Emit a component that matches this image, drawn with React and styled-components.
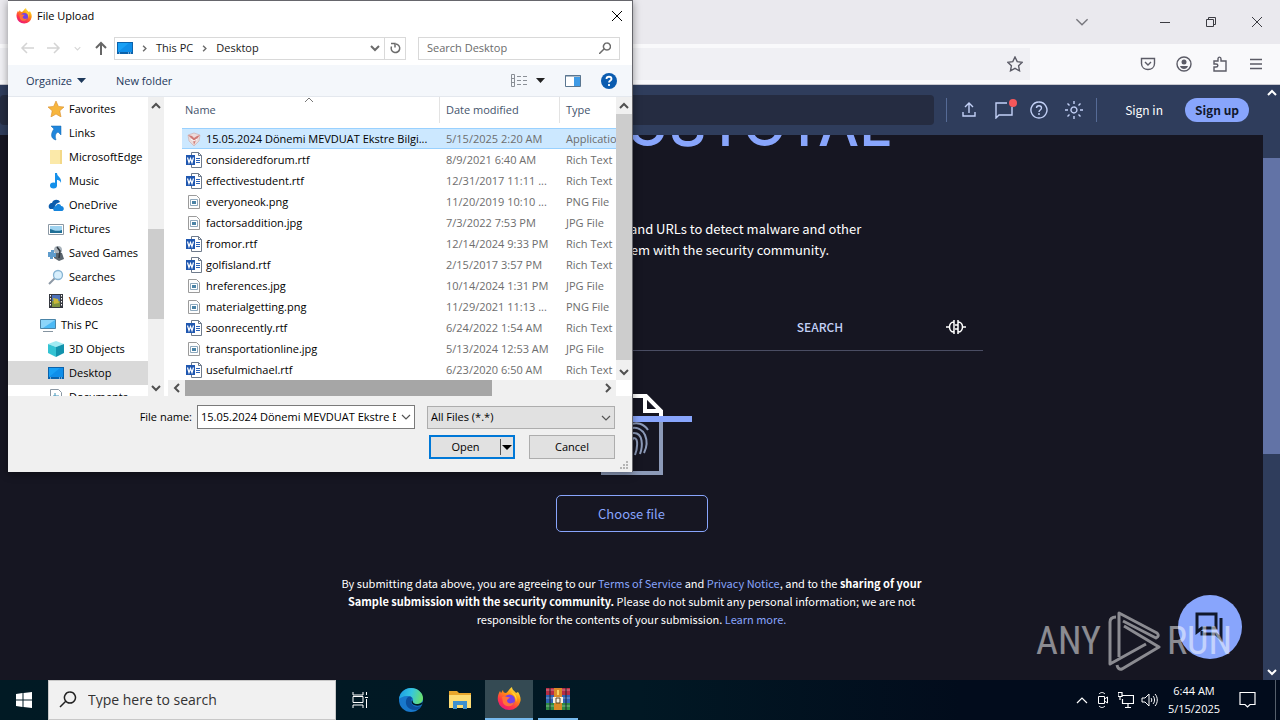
import React, { useState } from 'react';
import styled, { createGlobalStyle } from 'styled-components';

const GlobalStyle = createGlobalStyle`
  * {
    box-sizing: border-box;
  }
  body {
    margin: 0;
    background: #161622;
  }
  button, input, select {
    font: inherit;
    color: inherit;
    margin: 0;
  }
  button {
    padding: 0;
    border: 0;
    background: none;
  }
  a {
    text-decoration: none;
  }
  svg {
    display: block;
    flex: none;
  }
`;

const Desktop = styled.div`
  position: relative;
  display: flex;
  flex-direction: column;
  min-height: 100vh;
  overflow: hidden;
  font-family: 'Open Sans', 'Noto Sans', sans-serif;
  font-size: 11px;
  line-height: 16px;
`;

/* browser */
const Browser = styled.div`
  flex: 1;
  display: flex;
  flex-direction: column;
`;
const TabStrip = styled.div`
  height: 44px;
  background: #eae9ee;
  display: flex;
  align-items: center;
  justify-content: flex-end;
  gap: 30px;
  padding-right: 15px;
  color: #3c3c42;
`;
const TabsButton = styled.button`
  margin-right: 38px;
  color: #77777d;
`;
const UrlRow = styled.div`
  height: 41px;
  background: #f9f9fb;
  border-bottom: 1px solid #c9c9d0;
  display: flex;
  align-items: center;
  justify-content: space-between;
  padding-right: 16px;
  color: #5b5b66;
`;
const UrlField = styled.div`
  width: 1030px;
  height: 32px;
  background: #f0f0f4;
  display: flex;
  align-items: center;
  justify-content: flex-end;
  padding-right: 7px;
`;
const UrlActions = styled.div`
  display: flex;
  gap: 20px;
`;
const Viewport = styled.div`
  flex: 1;
  display: flex;
`;
const Page = styled.div`
  flex: 1;
  position: relative;
  display: flex;
  flex-direction: column;
  background: #161622;
  color: #fff;
  font-family: 'Noto Sans CJK SC', 'Noto Sans', sans-serif;
`;
const PageScroll = styled.div`
  width: 17px;
  background: #2f3d5c;
  display: flex;
  flex-direction: column;
  align-items: center;
  justify-content: space-between;
  padding: 3px 0;
  color: #fff;
`;
const PageThumb = styled.div`
  width: 17px;
  height: 296px;
  margin-bottom: 154px;
  background: #6273a6;
`;

const Header = styled.header`
  height: 50px;
  background: #2f3d5c;
  display: flex;
  align-items: center;
  padding-right: 14px;
  color: #c3d1f7;
`;
const HeaderSearch = styled.input`
  flex: 1;
  height: 30px;
  border: 0;
  border-radius: 4px;
  background: #252c41;
  outline: none;
`;
const HeaderGroup = styled.div`
  height: 24px;
  display: flex;
  align-items: center;
  gap: 15px;
  margin-left: 12px;
  padding: 0 12px;
  border: solid #566b96;
  border-width: 0 1px;
`;
const Badge = styled.span`
  position: absolute;
  top: -2px;
  right: -3px;
  width: 8px;
  height: 8px;
  border-radius: 50%;
  background: #f5575a;
`;
const IconButton = styled.button`
  position: relative;
`;
const SignIn = styled.a`
  margin-left: 28px;
  font-size: 12px;
  line-height: 24px;
  color: #fff;
`;
const SignUp = styled.a`
  margin-left: 22px;
  width: 64px;
  border-radius: 12px;
  background: #88a5fc;
  color: #10182c;
  font-size: 12px;
  font-weight: bold;
  line-height: 24px;
  text-align: center;
`;

const Main = styled.main`
  flex: 1;
  display: flex;
  flex-direction: column;
  align-items: center;
`;
const LogoClip = styled.div`
  width: 521px;
  height: 28px;
  overflow: hidden;
  display: flex;
  align-items: flex-end;
  justify-content: flex-end;
`;
const Logo = styled.div`
  font-family: Inter, sans-serif;
  font-size: 58px;
  font-weight: 500;
  line-height: 68px;
  padding-bottom: 4px;
  color: #88a5fc;
`;
const Intro = styled.p`
  margin: 55px 0 0;
  font-size: 13px;
  line-height: 21px;
  text-align: center;
`;
const Tabs = styled.div`
  width: 702px;
  height: 48px;
  margin-top: 43px;
  padding-left: 27px;
  display: flex;
  align-items: center;
  border-bottom: 1px solid #4a4d63;
`;
const Tab = styled.button`
  width: 205px;
  font-size: 12px;
  font-weight: 500;
  color: ${props => (props.$active ? '#88a5fc' : '#c3d1f7')};
`;
const TabIcon = styled.button`
  margin-left: 23px;
  color: #fff;
`;
const Upload = styled.div`
  margin-top: 42px;
`;
const ChooseFile = styled.button`
  width: 152px;
  height: 37px;
  margin-top: 20px;
  border: 1px solid #88a5fc;
  border-radius: 5px;
  color: #88a5fc;
  font-size: 13px;
`;
const Legal = styled.p`
  width: 590px;
  margin: 42px 0 0;
  font-size: 11px;
  line-height: 18px;
  text-align: center;
  > a {
    color: #88a5fc;
  }
`;
const Chat = styled.button`
  position: absolute;
  right: 21px;
  bottom: 21px;
  width: 64px;
  height: 64px;
  border-radius: 50%;
  background: #88a5fc;
  color: #10182c;
  display: flex;
  align-items: center;
  justify-content: center;
`;
const Watermark = styled.div`
  position: absolute;
  right: 48px;
  bottom: 48px;
  display: flex;
  align-items: center;
  gap: 6px;
  color: #fff;
  opacity: 0.5;
  font-family: 'Liberation Sans Narrow', 'Roboto Condensed', Roboto, sans-serif;
  font-size: 38px;
  line-height: 62px;
`;

/* upload dialog */
const Dialog = styled.section`
  position: absolute;
  top: 0;
  left: 8px;
  width: 625px;
  background: #fff;
  color: #000;
  border: solid #66666c;
  border-width: 1px 1px 0 0;
  box-shadow: 0 2px 8px rgba(0, 0, 0, 0.4);
`;
const TitleBar = styled.div`
  height: 30px;
  display: flex;
  align-items: center;
  gap: 5px;
  padding: 0 9px 0 8px;
`;
const Title = styled.h1`
  flex: 1;
  margin: 0;
  font-size: 11px;
  font-weight: normal;
`;
const NavRow = styled.div`
  height: 34px;
  display: flex;
  align-items: center;
  padding: 0 12px;
`;
const NavButtons = styled.div`
  width: 94px;
  display: flex;
  align-items: center;
  gap: 13px;
  color: #d4d4d4;
`;
const Address = styled.div`
  flex: 1;
  height: 23px;
  border: 1px solid #d9d9d9;
  display: flex;
  align-items: center;
  gap: 8px;
  padding-left: 2px;
  color: #6b6b6b;
  > a {
    color: #1a1a1a;
  }
`;
const AddressEnd = styled.div`
  height: 21px;
  margin-left: auto;
  display: flex;
  align-items: center;
  > button {
    height: 21px;
    padding: 0 4px;
  }
  > button + button {
    border-left: 1px solid #d9d9d9;
  }
`;
const SearchBox = styled.div`
  width: 202px;
  height: 23px;
  margin-left: 12px;
  border: 1px solid #d9d9d9;
  display: flex;
  align-items: center;
  padding: 0 8px;
  color: #6b6b6b;
  > input {
    flex: 1;
    min-width: 0;
    border: 0;
    padding: 0;
    outline: none;
  }
  > input::placeholder {
    color: #6b6b6b;
    opacity: 1;
  }
`;
const Toolbar = styled.div`
  height: 32px;
  background: #f4f7fb;
  border-bottom: 1px solid #e4e8ee;
  display: flex;
  align-items: center;
  padding: 0 15px 0 18px;
  color: #1e395b;
`;
const ToolButton = styled.button`
  display: flex;
  align-items: center;
  gap: 5px;
  margin-right: ${props => props.$gap || 0}px;
`;
const ToolSpacer = styled.div`
  flex: 1;
`;
const Panes = styled.div`
  height: 299px;
  display: flex;
`;
const Tree = styled.nav`
  width: 140px;
  overflow: hidden;
`;
const TreeItem = styled.a`
  height: 24px;
  display: flex;
  align-items: center;
  gap: 5px;
  padding-left: ${props => (props.$root ? 32 : 40)}px;
  background: ${props => (props.$active ? '#d9d9d9' : 'none')};
  color: #000;
  white-space: nowrap;
`;
const Scroll = styled.div`
  flex: none;
  display: flex;
  flex-direction: ${props => (props.$row ? 'row' : 'column')};
  align-items: center;
  background: #f0f0f0;
  color: #505050;
  ${props => (props.$row ? 'height: 16px;' : 'width: 16px;')}
  > button {
    width: 17px;
    height: 17px;
    display: flex;
    align-items: center;
    justify-content: center;
  }
`;
const Thumb = styled.div`
  background: ${props => props.color};
`;
const ListPane = styled.div`
  flex: 1;
  min-width: 0;
  margin-left: 4px;
  display: flex;
`;
const ListColumn = styled.div`
  flex: 1;
  min-width: 0;
  display: flex;
  flex-direction: column;
`;
const ListClip = styled.div`
  position: relative;
  flex: 1;
  min-height: 0;
  overflow: hidden;
  padding-left: 14px;
`;
const SortMark = styled.span`
  position: absolute;
  top: -2px;
  left: 136px;
  color: #777;
`;
const Table = styled.table`
  width: 100%;
  table-layout: fixed;
  border-collapse: separate;
  border-spacing: 0;
  th, td {
    padding: 0;
    font-weight: normal;
    text-align: left;
    white-space: nowrap;
    overflow: hidden;
  }
  th {
    height: 31px;
    vertical-align: top;
    color: #44546c;
  }
  th > div {
    height: 26px;
    line-height: 26px;
    padding-left: 6px;
    border-left: 1px solid #e3e3e3;
  }
  th:first-child > div {
    border: 0;
    padding-left: 3px;
  }
  td {
    height: 21px;
    line-height: 19px;
    padding-left: 7px;
    color: #6d6d6d;
    border: solid transparent;
    border-width: 1px 0;
  }
  td:first-child {
    color: #000;
    padding-left: 4px;
  }
`;
const FileRow = styled.tr`
  background: ${props => (props.$selected ? '#cce8ff' : 'none')};
  > td {
    border-color: ${props => (props.$selected ? '#99d1ff' : 'transparent')};
  }
`;
const FileName = styled.div`
  display: flex;
  align-items: center;
  gap: 4px;
`;
const Corner = styled.div`
  height: 16px;
  background: #fff;
`;
const ScrollSide = styled.div`
  display: flex;
  flex-direction: column;
  > :first-child {
    flex: 1;
  }
`;
const Footer = styled.div`
  position: relative;
  height: 76px;
  background: #f0f0f0;
  padding: 9px 17px 0 0;
`;
const FooterRow = styled.div`
  display: flex;
  justify-content: flex-end;
  align-items: center;
  margin-bottom: 6px;
`;
const Combo = styled.div`
  width: 218px;
  height: 24px;
  margin: 0 12px 0 5px;
  border: 1px solid #7a7a7a;
  background: #fff;
  display: flex;
  align-items: center;
  padding: 0 3px;
  color: #555;
  > input {
    flex: 1;
    min-width: 0;
    border: 0;
    padding: 0;
    outline: none;
    color: #000;
    margin-right: 5px;
  }
`;
const SelectWrap = styled.div`
  position: relative;
  width: 188px;
  color: #555;
  > select {
    width: 100%;
    height: 23px;
    display: block;
    appearance: none;
    border: 1px solid #adadad;
    border-radius: 0;
    background: #e1e1e1;
    padding: 0 3px;
    color: #000;
  }
  > svg {
    position: absolute;
    right: 4px;
    top: 7px;
  }
`;
const Button = styled.button`
  width: 86px;
  height: 24px;
  border: 1px solid #adadad;
  background: #e1e1e1;
`;
const OpenButton = styled(Button)`
  margin-right: 14px;
  border: 2px solid #0078d7;
  display: flex;
  align-items: center;
  > span {
    flex: 1;
    border-right: 1px solid #555;
  }
`;
const Grip = styled.span`
  position: absolute;
  right: 3px;
  bottom: 2px;
`;

/* taskbar */
const Taskbar = styled.footer`
  height: 40px;
  background: linear-gradient(to right, #011a24 0%, #011824 50%, #020c1c 75%);
  display: flex;
  color: #fff;
`;
const TaskButton = styled.button`
  width: ${props => (props.$narrow ? 40 : 48)}px;
  height: 40px;
  margin-right: ${props => props.$gap || 0}px;
  display: flex;
  align-items: center;
  justify-content: center;
  background: ${props => (props.$active ? '#344a53' : 'none')};
  border-bottom: ${props => (props.$open ? 2 : 0)}px solid #76b9ed;
`;
const TaskSearch = styled.label`
  width: 288px;
  border: 1px solid #c8c8c8;
  background: #f1f1f1;
  color: #222;
  display: flex;
  align-items: center;
  gap: 11px;
  padding-left: 10px;
  > input {
    flex: 1;
    min-width: 0;
    border: 0;
    padding: 0;
    outline: none;
    background: none;
    font-size: 14px;
  }
  > input::placeholder {
    color: #333;
    opacity: 1;
  }
`;
const Tray = styled.div`
  margin-left: auto;
  display: flex;
  align-items: center;
  gap: 7px;
  padding-right: 4px;
`;
const Clock = styled.time`
  width: 56px;
  text-align: center;
  line-height: 18px;
`;
const Notifications = styled.button`
  height: 40px;
  padding: 0 19px 0 10px;
  border-right: 1px solid #56606b;
`;

/* icons */
const Line = ({ d, w = 16, h = w, box, sw = 1, ...rest }) => (
  <svg
    width={w}
    height={h}
    viewBox={box || `0 0 ${w} ${h}`}
    fill="none"
    stroke="currentColor"
    strokeWidth={sw}
    {...rest}
  >
    <path d={d} />
  </svg>
);

const Chevron = ({ dir = 'down', size = 10, sw = 2 }) => {
  const paths = {
    down: 'M1 3l4 4 4-4',
    up: 'M1 7l4-4 4 4',
    left: 'M7 1L3 5l4 4',
    right: 'M3 1l4 4-4 4',
  };
  return <Line d={paths[dir]} w={size} box="0 0 10 10" sw={sw} />;
};

const Firefox = ({ size, id }) => (
  <svg width={size} height={size} viewBox="0 0 24 24">
    <defs>
      <linearGradient id={id} x1="0.8" y1="0" x2="0.2" y2="1">
        <stop offset="0" stopColor="#fff44f" />
        <stop offset="0.35" stopColor="#ff980e" />
        <stop offset="0.7" stopColor="#ff3647" />
        <stop offset="1" stopColor="#e31587" />
      </linearGradient>
    </defs>
    <path
      fill={`url(#${id})`}
      d="M15 0c0 3 3 4 4 6l2-1c2 3 3 6 2.500 9A11.500 11.500 0 0 1 1 14C0 9 2 6 3 4l1 2c1-1 1-2 2-3 0 2 1 3 3 3 2-1 3-4 6-6z"
    />
    <circle cx="12.500" cy="13" r="5.500" fill="#7542e5" />
    <path d="M5 10c3-2 5 1 8 0-1 2-3 2-3 4 1 3 5 3 7 1-1 5-8 6-11 1z" fill="#ff7139" />
    <path d="M14 5c4 1 7 5 5 10 0-4-1-6-5-10z" fill="#ffd43a" />
  </svg>
);

const Monitor = () => (
  <svg width="16" height="16" viewBox="0 0 16 16">
    <path d="M0 2h16v12H0z" fill="#0b62ab" />
    <path d="M1 3h14v9H1z" fill="#18a0f5" />
    <path d="M1 12L12 3h3v9z" fill="#0f8ee9" />
    <path d="M2 13h1M11 13h1M13 13h1" stroke="#cfeaff" />
  </svg>
);

const treeIcons = {
  star: <path d="M8 0l2.400 5.400 5.600.6-4.200 3.800L13 16l-5-3-5 3 1.200-6.200L0 6l5.600-.6z" fill="#f7b63e" stroke="#d88d2a" strokeWidth=".6" />,
  link: <path d="M3 1h10v9l-3-3c-3 2-3 4-2 8-5-1-6-6-2-11z" fill="#2086dc" stroke="#1264ac" strokeWidth=".5" />,
  folder: (
    <g>
      <path d="M2 1h12v14H2z" fill="#fbe9a9" />
      <path d="M12 1h2v14h-2z" fill="#f3d888" />
    </g>
  ),
  music: (
    <g fill="#1590ea">
      <ellipse cx="5.500" cy="12.500" rx="3.500" ry="3" />
      <path d="M7 0h2c0 4 5 4 4 10-1-3-3-3-4-3v6H7z" />
    </g>
  ),
  cloud: (
    <g>
      <path d="M1 11c-1-3 1-5 3-5 1-4 7-4 8-1l-4 2-2 5H2z" fill="#0b5cad" />
      <path d="M6 14c-2-2 0-5 2-5 1-3 5-2 5 0 3 0 4 4 1 5z" fill="#1584dc" />
    </g>
  ),
  picture: (
    <g>
      <path d="M.5 3.500h15v10H.5z" fill="#fff" stroke="#8b98a4" />
      <path d="M2 5h12v7H2z" fill="#9fd3f0" />
      <path d="M2 8c4 1 6 3 12 1v3H2z" fill="#1f6f96" />
    </g>
  ),
  games: (
    <g>
      <circle cx="10" cy="5" r="4" fill="#a8b2ba" />
      <path d="M6 8h8l2 6-5 2-5-3z" fill="#5b656d" />
      <path d="M9 2l3 4-1 7" stroke="#2d343a" strokeWidth="1.500" fill="none" />
      <path d="M0 7h3V5h3v3h2v4H5v2H2v-2H0z" fill="#5e9ccc" />
    </g>
  ),
  search: (
    <g fill="none">
      <path d="M7 9l-6 6" stroke="#8d99a6" strokeWidth="2" />
      <circle cx="10" cy="6" r="4.500" fill="#d8effc" stroke="#87b4d3" strokeWidth="1.300" />
    </g>
  ),
  video: (
    <g>
      <path d="M1 1h14v14H1z" fill="#35383f" />
      <path d="M4 2h8v6H4z" fill="#4d71b8" />
      <path d="M4 8h8v6H4z" fill="#7d9140" />
      <path d="M5 5l5 1 1 4-5 1z" fill="#c9b83a" />
      <path d="M2.500 2v12M13.500 2v12" stroke="#fff" strokeDasharray="1.500 1.500" />
    </g>
  ),
  pc: (
    <g>
      <path d="M.5 2.500h15v9H.5z" fill="#4cb9f5" stroke="#4a84a8" />
      <path d="M1 3h14L3 11H1z" fill="#8cd5fa" />
      <path d="M3 14.500h10" stroke="#8594a0" />
    </g>
  ),
  cube: (
    <g>
      <path d="M8 0l8 3-8 3-8-3z" fill="#a0ebf2" />
      <path d="M0 3l8 3v10l-8-4z" fill="#33c3d3" />
      <path d="M16 3L8 6v10l8-4z" fill="#1293ad" />
    </g>
  ),
  doc: (
    <g>
      <path d="M2.500.5h8l3 3v12h-11z" fill="#fff" stroke="#8b98a4" />
      <path d="M5 7h6M5 9h6M5 11h6M7 4v5" stroke="#3c92b8" />
    </g>
  ),
};

const TreeIcon = ({ name }) => (
  name === 'desktop' ? <Monitor /> : (
    <svg width="16" height="16" viewBox="0 0 16 16">{treeIcons[name]}</svg>
  )
);

const FileIcon = ({ kind }) => (
  <svg width="16" height="16" viewBox="0 0 16 16">
    {kind === 'exe' && (
      <g>
        <path d="M2 4l6-2 6 2-1 6-5 5-5-5z" fill="#ecdcdc" stroke="#c9a9a8" strokeWidth=".6" />
        <path d="M2 4l4 1 2 2 3-2 3-1-4 5-2 5-1-5z" fill="#cf7a76" />
        <path d="M5 8l3 2 3-2" stroke="#fff" fill="none" />
      </g>
    )}
    {kind === 'rtf' && (
      <g>
        <path d="M5.500.5h7l3 3v12h-10z" fill="#fff" stroke="#6e7b8c" />
        <path d="M12.500.5v3h3" fill="none" stroke="#6e7b8c" />
        <path d="M10 6.500h4M10 8.500h4M10 10.500h4" stroke="#2b62b8" />
        <path d="M0 3h9v10H0z" fill="#1f57b0" />
        <path d="M1.500 5.500l1.500 5 1.500-4 1.500 4 1.500-5" fill="none" stroke="#fff" strokeWidth="1.200" />
      </g>
    )}
    {kind === 'img' && (
      <g>
        <path d="M2.500 1.500h8l3 3v10h-11z" fill="#fdfdfd" stroke="#9b9b9b" />
        <path d="M4.500 5.500h7v6h-7z" fill="#fff" stroke="#8fa9bd" />
        <path d="M6 7h4v3H6z" fill="#4b83a6" />
      </g>
    )}
  </svg>
);

const Fingerprint = () => (
  <svg width="120" height="82" viewBox="0 0 120 82" fill="none">
    <path d="M31 24v56h58V24" stroke="#8c9ab8" strokeWidth="4" />
    <path d="M31 24V3h43l15 15v6" stroke="#fff" strokeWidth="4" />
    <path d="M73 3v15h15" stroke="#fff" strokeWidth="4" />
    <g stroke="#8c9ab8" strokeWidth="2">
      <path d="M57 32c8-4 15-1 19 5" />
      <path d="M51 46c0-12 16-16 22-4 3 7 2 12-1 18" />
      <path d="M55 58c-1-12-1-18 7-18 9 0 9 13 6 21" />
      <path d="M59 60c1-5-1-14 3-15 5 0 3 12 1 17" />
    </g>
    <path d="M0 23h120v6H0z" fill="#88a5fc" />
  </svg>
);

const WinRar = () => (
  <svg width="24" height="24" viewBox="0 0 24 24">
    <path d="M0 1h24v7H0z" fill="#b72d45" />
    <path d="M0 8h24v8H0z" fill="#2f62b5" />
    <path d="M0 16h24v7H0z" fill="#2f8b44" />
    <path d="M0 3h24M0 11h24M0 19h24" stroke="#fff" strokeOpacity=".4" />
    <path d="M4 1v22M20 1v22" stroke="#1d2333" strokeWidth="2" strokeOpacity=".5" />
    <path d="M8 1h8v22H8z" fill="#d98a26" />
    <path d="M7 10h10v6H7z" fill="#f5f0e0" />
    <path d="M10 11h4v5h-4z" stroke="#5d4522" fill="none" />
    <path d="M11 3h2v5h-2z" fill="#f6d060" />
  </svg>
);

const Edge = () => (
  <svg width="24" height="24" viewBox="0 0 24 24">
    <defs>
      <linearGradient id="edgeTop" x1="0" y1="0.3" x2="1" y2="0.5">
        <stop offset="0" stopColor="#1b9de2" />
        <stop offset="0.5" stopColor="#35c6e0" />
        <stop offset="1" stopColor="#6be06a" />
      </linearGradient>
    </defs>
    <circle cx="12" cy="12" r="12" fill="#1878cc" />
    <path d="M0 11C1 4 6 0 12 0c7 0 12 5 12 10 0 4-3 6-6 6-3 0-5-1-4-3 1-4-3-5-6-5-4 0-7 2-8 3z" fill="url(#edgeTop)" />
    <path d="M8 10c-3 5 0 12 8 12 3 0 5-2 6-4-4 2-10 0-10-5 0-2 2-3 0-4-1-1-3 0-4 1z" fill="#0c4f9d" />
    <path d="M13 12c-2 4 3 7 9 5l3-3-3 1c-3 2-8 1-8-1z" fill="#011a24" />
  </svg>
);

const Explorer = () => (
  <svg width="22" height="20" viewBox="0 0 22 20">
    <path d="M0 1h8l2 2h12v15H0z" fill="#e8a62c" />
    <path d="M0 5h22v13H0z" fill="#fddc74" />
    <path d="M4 11h14v8h-4v-4H8v4H4z" fill="#3d8fd0" />
  </svg>
);

const tree = [
  ['Favorites', 'star'],
  ['Links', 'link'],
  ['MicrosoftEdge', 'folder'],
  ['Music', 'music'],
  ['OneDrive', 'cloud'],
  ['Pictures', 'picture'],
  ['Saved Games', 'games'],
  ['Searches', 'search'],
  ['Videos', 'video'],
  ['This PC', 'pc'],
  ['3D Objects', 'cube'],
  ['Desktop', 'desktop'],
  ['Documents', 'doc'],
];

const files = [
  ['15.05.2024 Dönemi MEVDUAT Ekstre Bilgi...', '5/15/2025 2:20 AM', 'Application', 'exe'],
  ['consideredforum.rtf', '8/9/2021 6:40 AM', 'Rich Text', 'rtf'],
  ['effectivestudent.rtf', '12/31/2017 11:11 ...', 'Rich Text', 'rtf'],
  ['everyoneok.png', '11/20/2019 10:10 ...', 'PNG File', 'img'],
  ['factorsaddition.jpg', '7/3/2022 7:53 PM', 'JPG File', 'img'],
  ['fromor.rtf', '12/14/2024 9:33 PM', 'Rich Text', 'rtf'],
  ['golfisland.rtf', '2/15/2017 3:57 PM', 'Rich Text', 'rtf'],
  ['hreferences.jpg', '10/14/2024 1:31 PM', 'JPG File', 'img'],
  ['materialgetting.png', '11/29/2021 11:13 ...', 'PNG File', 'img'],
  ['soonrecently.rtf', '6/24/2022 1:54 AM', 'Rich Text', 'rtf'],
  ['transportationline.jpg', '5/13/2024 12:53 AM', 'JPG File', 'img'],
  ['usefulmichael.rtf', '6/23/2020 6:50 AM', 'Rich Text', 'rtf'],
];

const ThumbV = styled(Thumb)`
  width: 100%;
  height: ${props => props.$size}px;
  margin: ${props => props.$before || 0}px 0 auto;
`;
const ThumbH = styled(Thumb)`
  height: 100%;
  width: ${props => props.$size}px;
  margin-right: auto;
`;

function UploadDialog() {
  const [selected, setSelected] = useState(0);
  const [fileName, setFileName] = useState('15.05.2024 Dönemi MEVDUAT Ekstre Bilgileri');

  return (
    <Dialog aria-label="File Upload">
      <TitleBar>
        <Firefox size={16} id="ffTitle" />
        <Title>File Upload</Title>
        <button aria-label="Close">
          <Line d="M1 1l10 10M11 1L1 11" w={12} />
        </button>
      </TitleBar>
      <NavRow>
        <NavButtons>
          <Line d="M14 7H2M7 2L2 7l5 5" w={14} sw={1.5} />
          <Line d="M0 7h12M7 2l5 5-5 5" w={14} sw={1.5} />
          <Chevron size={7} sw={1.5} />
          <Line d="M7 14V2M2 7l5-5 5 5" w={14} sw={2} color="#666" />
        </NavButtons>
        <Address>
          <Monitor />
          <Chevron dir="right" size={7} />
          <a href="#pc">This PC</a>
          <Chevron dir="right" size={7} />
          <a href="#desktop">Desktop</a>
          <AddressEnd>
            <button aria-label="Previous locations"><Chevron /></button>
            <button aria-label="Refresh">
              <Line d="M7 2A4.300 4.300 0 1 1 2.500 4.500M2 1.500h4v4" w={12} sw={1.5} />
            </button>
          </AddressEnd>
        </Address>
        <SearchBox>
          <input aria-label="Search Desktop" placeholder="Search Desktop" />
          <Line d="M8 1a3.500 3.500 0 1 1-.1 0M5 7l-5 5" w={12} sw={1.5} />
        </SearchBox>
      </NavRow>
      <Toolbar>
        <ToolButton $gap={30}>
          Organize
          <svg width="9" height="5"><path d="M0 0h9L4.500 5z" fill="#1e395b" /></svg>
        </ToolButton>
        <ToolButton>New folder</ToolButton>
        <ToolSpacer />
        <ToolButton $gap={20} aria-label="View">
          <svg width="18" height="14" stroke="#8a8f96" fill="none">
            <path d="M.5.5h3v12h-3zM0 4.500h4M0 8.500h4" />
            <path d="M6 2.500h4M6 6.500h4M6 10.500h4M12 2.500h4M12 6.500h4M12 10.500h4" />
          </svg>
          <svg width="11" height="5"><path d="M2 0h9L6.500 5z" fill="#222" /></svg>
        </ToolButton>
        <ToolButton $gap={20} aria-label="Preview pane">
          <svg width="16" height="12">
            <path d="M.5.5h15v11H.5z" fill="#fff" stroke="#5a7690" />
            <path d="M9 2h6v9H9z" fill="#3f9be6" />
            <path d="M0 1h16" stroke="#5a7690" />
          </svg>
        </ToolButton>
        <ToolButton aria-label="Help">
          <svg width="16" height="16" viewBox="0 0 16 16">
            <circle cx="8" cy="8" r="8" fill="#0b5cb0" />
            <path d="M5.500 6c0-3 5-3 5 0 0 1.500-2.500 1.500-2.500 3.500M8 11v2" fill="none" stroke="#fff" strokeWidth="1.800" />
          </svg>
        </ToolButton>
      </Toolbar>
      <Panes>
        <Tree>
          {tree.map(([label, icon]) => (
            <TreeItem
              key={label}
              href={`#${icon}`}
              $root={icon === 'pc'}
              $active={icon === 'desktop'}
            >
              <TreeIcon name={icon} />
              {label}
            </TreeItem>
          ))}
        </Tree>
        <Scroll>
          <button aria-label="Up"><Chevron dir="up" /></button>
          <ThumbV color="#cdcdcd" $size={90} $before={115} />
          <button aria-label="Down"><Chevron /></button>
        </Scroll>
        <ListPane>
          <ListColumn>
            <ListClip>
              <SortMark><Chevron dir="up" sw={1} /></SortMark>
              <Table>
                <colgroup>
                  <col />
                  <col width="120" />
                  <col width="57" />
                </colgroup>
                <thead>
                  <tr>
                    <th><div>Name</div></th>
                    <th><div>Date modified</div></th>
                    <th><div>Type</div></th>
                  </tr>
                </thead>
                <tbody>
                  {files.map(([name, date, type, kind], i) => (
                    <FileRow
                      key={name}
                      $selected={i === selected}
                      onClick={() => setSelected(i)}
                    >
                      <td><FileName><FileIcon kind={kind} />{name}</FileName></td>
                      <td>{date}</td>
                      <td>{type}</td>
                    </FileRow>
                  ))}
                </tbody>
              </Table>
            </ListClip>
            <Scroll $row>
              <button aria-label="Left"><Chevron dir="left" /></button>
              <ThumbH color="#a6a6a6" $size={307} />
              <button aria-label="Right"><Chevron dir="right" /></button>
            </Scroll>
          </ListColumn>
          <ScrollSide>
            <Scroll>
              <button aria-label="Up"><Chevron dir="up" /></button>
              <ThumbV color="#cdcdcd" $size={246} />
              <button aria-label="Down"><Chevron /></button>
            </Scroll>
            <Corner />
          </ScrollSide>
        </ListPane>
      </Panes>
      <Footer>
        <FooterRow>
          <label htmlFor="file-name">File name:</label>
          <Combo>
            <input
              id="file-name"
              value={fileName}
              onChange={e => setFileName(e.target.value)}
            />
            <Chevron sw={1.2} />
          </Combo>
          <SelectWrap>
            <select aria-label="File type">
              <option>All Files (*.*)</option>
            </select>
            <Chevron sw={1.2} />
          </SelectWrap>
        </FooterRow>
        <FooterRow>
          <OpenButton>
            <span>Open</span>
            <svg width="12" height="5"><path d="M1 0h10L6 5z" /></svg>
          </OpenButton>
          <Button>Cancel</Button>
        </FooterRow>
        <Grip>
          <svg width="9" height="9" fill="#b5b5b5">
            <path d="M6 0h2v2H6zM3 3h2v2H3zM6 3h2v2H6zM0 6h2v2H0zM3 6h2v2H3zM6 6h2v2H6z" />
          </svg>
        </Grip>
      </Footer>
    </Dialog>
  );
}

function VirusPage() {
  return (
    <Page>
      <Header>
        <HeaderSearch aria-label="Search" />
        <HeaderGroup>
          <IconButton aria-label="Upload">
            <Line d="M10 13V4M6 7l4-4 4 4M4 12v4h12v-4" w={20} sw={1.4} />
          </IconButton>
          <IconButton aria-label="Comments">
            <Line d="M18 6v8H5l-3 3V2h11" w={20} h={18} sw={1.4} />
            <Badge />
          </IconButton>
          <IconButton aria-label="Help">
            <Line d="M10 2a8 8 0 1 1-.1 0M7.500 8c0-3 5-3 5 0 0 2-2.500 2-2.500 4M10 13v2" w={20} sw={1.4} />
          </IconButton>
          <IconButton aria-label="Theme">
            <Line d="M10 7a3 3 0 1 1-.1 0M10 1v3M10 16v3M1 10h3M16 10h3M3.500 3.500l2 2M14.500 14.500l2 2M3.500 16.500l2-2M14.500 5.500l2-2" w={20} sw={1.4} />
          </IconButton>
        </HeaderGroup>
        <SignIn href="#signin">Sign in</SignIn>
        <SignUp href="#signup">Sign up</SignUp>
      </Header>
      <Main>
        <LogoClip><Logo>VIRUSTOTAL</Logo></LogoClip>
        <Intro>
          Analyse suspicious files, domains, IPs and URLs to detect malware and other
          <br />
          breaches, automatically share them with the security community.
        </Intro>
        <Tabs>
          <Tab $active>FILE</Tab>
          <Tab>URL</Tab>
          <Tab>SEARCH</Tab>
          <TabIcon aria-label="Assistant">
            <Line d="M0 8h3M8 1v14M8 3C2 3 2 13 8 13M12 1v14M12 3c6 0 6 10 0 10M9 6h3M9 10h3M17 8h3" w={20} h={16} sw={1.5} />
          </TabIcon>
        </Tabs>
        <Upload><Fingerprint /></Upload>
        <ChooseFile>Choose file</ChooseFile>
        <Legal>
          By submitting data above, you are agreeing to our <a href="#tos">Terms of Service</a> and{' '}
          <a href="#privacy">Privacy Notice</a>, and to the <b>sharing of your
          <br />
          Sample submission with the security community.</b> Please do not submit any personal information; we are not
          <br />
          responsible for the contents of your submission. <a href="#more">Learn more.</a>
        </Legal>
      </Main>
      <Chat aria-label="Chat">
        <svg width="32" height="32" viewBox="0 0 32 32" fill="none" stroke="currentColor" strokeWidth="3">
          <path d="M3 3h19v14H8l-5 4z" />
          <path d="M27 7v21l-5-5H8v-3" />
        </svg>
      </Chat>
    </Page>
  );
}

export default function App() {
  return (
    <Desktop>
      <GlobalStyle />
      <Browser>
        <TabStrip>
          <TabsButton aria-label="List tabs"><Chevron size={14} sw={1} /></TabsButton>
          <button aria-label="Minimize"><Line d="M3 8.500h10" /></button>
          <button aria-label="Restore"><Line d="M3.500 5.500h7v7h-7zM5.500 5V3.500h7v7H11" /></button>
          <button aria-label="Close"><Line d="M3 3l10 10M13 3L3 13" /></button>
        </TabStrip>
        <UrlRow>
          <UrlField>
            <button aria-label="Bookmark">
              <Line d="M8 1l2.200 4.600 5 .7-3.600 3.500.9 5L8 12.400 3.500 14.800l.9-5L.8 6.300l5-.7z" sw={1.4} />
            </button>
          </UrlField>
          <UrlActions>
            <button aria-label="Pocket">
              <Line d="M1.500 2.500h13v5c0 8-13 8-13 0zM5 6l3 3 3-3" sw={1.4} />
            </button>
            <button aria-label="Account">
              <svg width="16" height="16" viewBox="0 0 16 16" fill="currentColor">
                <circle cx="8" cy="8" r="7" fill="none" stroke="currentColor" strokeWidth="1.400" />
                <circle cx="8" cy="6" r="2.500" />
                <path d="M4 10h8c-1 4-7 4-8 0z" />
              </svg>
            </button>
            <button aria-label="Extensions">
              <Line d="M2 5h4V3c0-2.500 3-2.500 3 0v2h5v10H2v-4h2c2.500 0 2.500-3 0-3H2z" sw={1.4} />
            </button>
            <button aria-label="Menu"><Line d="M2 3.500h12M2 8h12M2 12.500h12" sw={1.4} /></button>
          </UrlActions>
        </UrlRow>
        <Viewport>
          <VirusPage />
          <PageScroll>
            <Chevron dir="up" />
            <PageThumb />
            <Chevron />
          </PageScroll>
        </Viewport>
      </Browser>
      <Taskbar>
        <TaskButton aria-label="Start">
          <svg width="16" height="16" viewBox="0 0 16 16" fill="#fff">
            <path d="M0 2l6.500-1v6.500H0zM7.500 1L16 0v7.500H7.500zM0 8.500h6.500V15L0 14zM7.500 8.500H16V16l-8.500-1z" />
          </svg>
        </TaskButton>
        <TaskSearch>
          <Line d="M11 1a5.500 5.500 0 1 1-.1 0M7 10l-6 6" w={18} sw={1.5} />
          <input aria-label="Search" placeholder="Type here to search" />
        </TaskSearch>
        <TaskButton aria-label="Task view" $gap={3}>
          <Line d="M1 0v3h10V0M1 4.500h10v6H1zM1 16v-3h10v3M14.500 0v3M14.500 7v9M13 5.500h3" />
        </TaskButton>
        <TaskButton aria-label="Edge" $gap={1}><Edge /></TaskButton>
        <TaskButton aria-label="File Explorer" $gap={1}><Explorer /></TaskButton>
        <TaskButton aria-label="Firefox" $active $open $gap={5}>
          <Firefox size={24} id="ffTask" />
        </TaskButton>
        <TaskButton aria-label="WinRAR" $open $narrow><WinRar /></TaskButton>
        <Tray>
          <Line d="M1 9l5-5 5 5" w={12} sw={1.2} />
          <Line d="M3.500 5.500h6v7h-6zM9.500 8l3-2v6l-3-2M4 3c2-2 4-2 6 0M4 15c2 2 4 2 6 0" h={18} />
          <Line d="M4 3.500h11.500v8H4.500V7M0 .5h4v4H0zM2 4v4M7 15.500h6M10 12v3" sw={1.2} />
          <Line d="M1 6h3l4-4v12l-4-4H1zM10 6c1 1 1 3 0 4M12 4c2 2 2 6 0 8M14 2c3 3 3 9 0 12" w={18} h={16} />
          <Clock>6:44 AM<br />5/15/2025</Clock>
          <Notifications aria-label="Notifications">
            <Line d="M1 1.500h15v12h-5l-2.500 2.500L6 13.500H1z" w={17} h={18} sw={1.2} />
          </Notifications>
        </Tray>
      </Taskbar>
      <UploadDialog />
      <Watermark>
        <span>ANY</span>
        <svg width="54" height="62" viewBox="0 0 54 62" fill="none" stroke="#fff" strokeWidth="3" strokeLinejoin="round">
          <path d="M9 7q-6 0-6 5v42l36-20" />
          <path d="M12 47V3l38 20q3 3-1 5L16 11" />
          <path d="M17 16l35 21-37 22q-4 1-5-4" />
        </svg>
        <span>RUN</span>
      </Watermark>
    </Desktop>
  );
}
